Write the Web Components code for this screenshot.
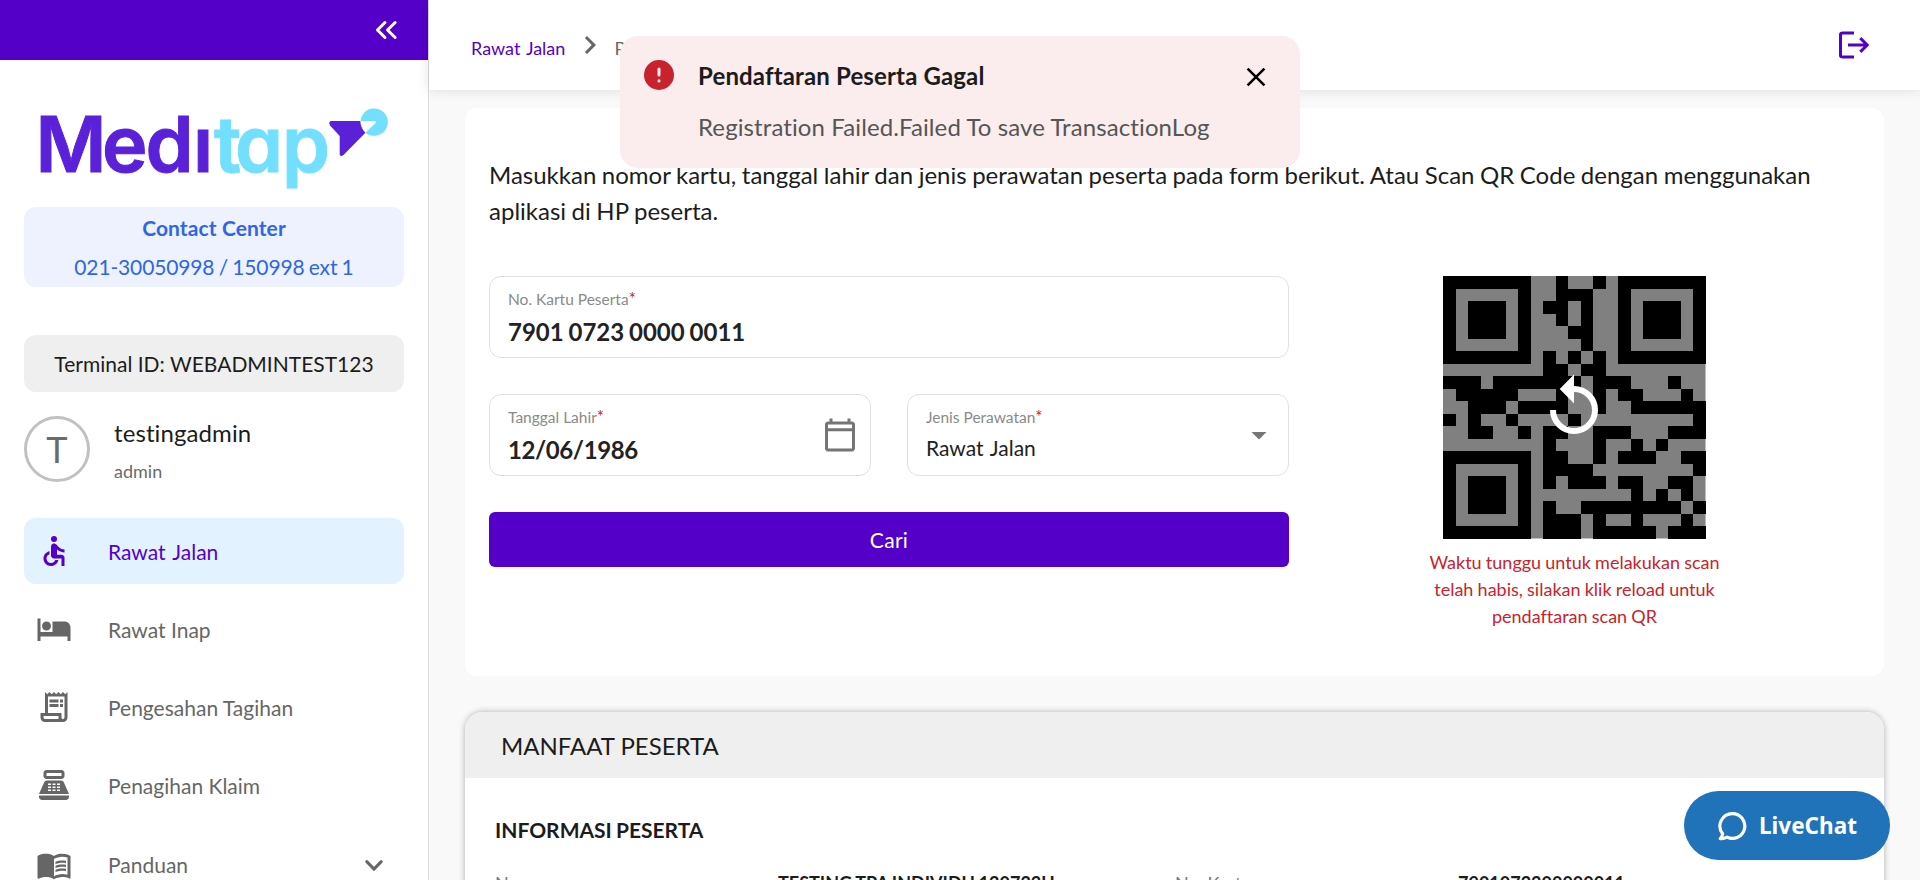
<!DOCTYPE html>
<html lang="id">
<head>
<meta charset="utf-8">
<title>Meditap</title>
<style>
html,body{margin:0;height:100%;overflow:hidden}
body{font-family:Lato,"Liberation Sans",sans-serif;font-variant-ligatures:none;color:#1c1c1c;background:#f9f9f9}
</style>
</head>
<body>
<mt-app></mt-app>
<script>
const define = (name, html, setup) => customElements.define(name, class extends HTMLElement {
  constructor() {
    super();
    const t = document.createElement('template');
    t.innerHTML = html;
    this.attachShadow({mode: 'open'}).append(t.content.cloneNode(true));
  }
  connectedCallback() { if (setup) setup(this, this.shadowRoot); }
});

const ICONS = {
  wheelchair: '<circle cx="12" cy="4" r="2"/><path d="M19 13v-2c-1.54.02-3.09-.75-4.07-1.83l-1.29-1.43c-.17-.19-.38-.34-.61-.45-.01 0-.01-.01-.02-.01H13c-.35-.2-.75-.3-1.19-.26C10.76 7.11 10 8.04 10 9.09V15c0 1.1.9 2 2 2h5v5h2v-5.5c0-1.1-.9-2-2-2h-3v-3.45c1.29 1.07 3.25 1.94 5 1.95zm-6.17 5c-.41 1.16-1.52 2-2.83 2-1.66 0-3-1.34-3-3 0-1.31.84-2.41 2-2.83V12.1c-2.28.46-4 2.48-4 4.9 0 2.76 2.24 5 5 5 2.42 0 4.44-1.72 4.9-4h-2.07z"/>',
  bed: '<path d="M7 13c1.66 0 3-1.34 3-3S8.66 7 7 7s-3 1.34-3 3 1.34 3 3 3zm12-6h-8v7H3V5H1v15h2v-3h18v3h2v-9c0-2.21-1.79-4-4-4z"/>',
  receipt: '<path d="M19.5 3.5L18 2l-1.5 1.5L15 2l-1.5 1.5L12 2l-1.5 1.5L9 2 7.5 3.5 6 2v14H3v3c0 1.66 1.34 3 3 3h12c1.66 0 3-1.34 3-3V2l-1.5 1.5zM15 20H6c-.55 0-1-.45-1-1v-1h10v2zm4-1c0 .55-.45 1-1 1s-1-.45-1-1v-3H8V5h11v14z"/><path d="M9 7h6v2H9zM16 7h2v2h-2zM9 10h6v2H9zM16 10h2v2h-2z"/>',
  register: '<path fill-rule="evenodd" d="M17 2H7c-1.1 0-2 .9-2 2v2c0 1.1.9 2 2 2h10c1.1 0 2-.9 2-2V4c0-1.1-.9-2-2-2zm0 4H7V4h10v2zm3 16H4c-1.1 0-2-.9-2-2v-1h20v1c0 1.1-.9 2-2 2zm-1.47-11.81C18.21 9.47 17.49 9 16.7 9H7.3c-.79 0-1.51.47-1.83 1.19L2 18h20l-3.47-7.81zM8 11h2v1H8zM11 11h2v1h-2zM14 11h2v1h-2zM8 13h2v1H8zM11 13h2v1h-2zM14 13h2v1h-2zM8 15h2v1H8zM11 15h2v1h-2zM14 15h2v1h-2z"/>',
  book: '<path d="M21 5c-1.11-.35-2.33-.5-3.5-.5-1.95 0-4.05.4-5.5 1.5-1.45-1.1-3.55-1.5-5.5-1.5S2.45 4.9 1 6v14.65c0 .25.25.5.5.5.1 0 .15-.05.25-.05C3.1 20.45 5.05 20 6.5 20c1.95 0 4.05.4 5.5 1.5 1.35-.85 3.8-1.5 5.5-1.5 1.65 0 3.35.3 4.75 1.05.1.05.15.05.25.05.25 0 .5-.25.5-.5V6c-.6-.45-1.25-.75-2-1zm0 13.5c-1.1-.35-2.3-.5-3.5-.5-1.7 0-4.15.65-5.5 1.5V8c1.35-.85 3.8-1.5 5.5-1.5 1.2 0 2.4.15 3.5.5v11.5z"/><path d="M17.5 10.5c.88 0 1.73.09 2.5.26V9.24c-.79-.15-1.64-.24-2.5-.24-1.7 0-3.24.29-4.5.83v1.66c1.13-.64 2.7-.99 4.5-.99zM13 12.49v1.66c1.13-.64 2.7-.99 4.5-.99.88 0 1.73.09 2.5.26V11.9c-.79-.15-1.64-.24-2.5-.24-1.7 0-3.24.3-4.5.83zM17.5 14.33c-1.7 0-3.24.29-4.5.83v1.66c1.13-.64 2.7-.99 4.5-.99.88 0 1.73.09 2.5.26v-1.52c-.79-.16-1.64-.24-2.5-.24z"/>',
  down: '<path fill="none" stroke="currentColor" stroke-width="2" stroke-linecap="round" d="M7.2 9.1L12 14l4.8-4.9"/>',
  right: '<path d="M8.59 16.59L13.17 12 8.59 7.41 10 6l6 6-6 6z"/>',
  collapse: '<path fill="none" stroke="currentColor" stroke-width="2" stroke-linecap="round" stroke-linejoin="round" d="M18.1 7L13 12l5.1 5M11.3 7l-5 5 5 5"/>',
  logout: '<path fill="none" stroke="currentColor" stroke-width="2" d="M12 4H4.600Q3 4 3 5v14q0 1 1.600 1H12M8 12h12.600M16.200 7.400l4.600 4.600-4.600 4.600"/>',
  calendar: '<path d="M20 3h-1V1h-2v2H7V1H5v2H4c-1.1 0-2 .9-2 2v16c0 1.1.9 2 2 2h16c1.1 0 2-.9 2-2V5c0-1.1-.9-2-2-2zm0 18H4V9.5h16V21zm0-13.5H4V5h16v2.5z"/>',
  caret: '<path d="M7 10l5 5 5-5z"/>',
  alert: '<circle cx="12" cy="12" r="10"/><path stroke="#fbeced" stroke-width="2" stroke-linecap="round" d="M12 8v4M12 15.900v.1"/>',
  close: '<path fill="none" stroke="currentColor" stroke-width="1.7" d="M6.4 6.4l11.200 11.200M17.600 6.400L6.400 17.600"/>',
  chat: '<path fill="none" stroke="currentColor" stroke-width="2.400" stroke-linejoin="round" d="M12.300 2.700a9.300 9.300 0 1 1-4.100 17.650C6.800 21.200 5 21.700 3.200 21.500c1.100-1.100 1.700-2.300 1.800-3.700A9.300 9.300 0 0 1 12.300 2.700z"/>'
};

define('mt-icon', `<style>:host{display:block;flex:none;width:36px;height:36px}svg{display:block;width:100%;height:100%;fill:currentColor}</style><svg viewBox="0 0 24 24"></svg>`,
  (el, root) => { root.querySelector('svg').innerHTML = ICONS[el.getAttribute('name')]; });

define('mt-logo', `<style>:host{display:block;height:80px}svg{display:block;overflow:visible}
text{font-family:Inter,"Liberation Sans",sans-serif;font-weight:600;font-size:77px;font-feature-settings:"cv11" 1;stroke-width:1px}
.a{fill:#5b21d8;stroke:#5b21d8}.b{fill:#73dfff;stroke:#73dfff}</style>
<svg width="350" height="80" viewBox="0 0 350 80">
<text class="a" y="63.500" x="-4.500 62 105.500 153">Medi</text>
<rect x="157" y="0" width="14" height="21" fill="#fff"/>
<text class="b" y="63.500" x="174 195 242">tap</text>
<path d="M291.500 13H320.300Q320.500 20 325.400 24.800L303.500 47Q300 49 299.700 46.500V28L290 17.500Q288 13 291.500 13z" fill="#5b21d8"/>
<path d="M320.500 13A13.700 13.700 0 1 1 325.500 24.700L335.500 15Q337 13 334.500 13Z" fill="#73dfff"/>
</svg>`);

define('mt-nav-item', `<style>
:host{display:flex;align-items:center;box-sizing:border-box;height:66px;padding:0 12px;border-radius:12px;font-size:21px;color:#666}
:host([active]){background:#e3f2ff;color:#5500c8;word-spacing:2px}
:host([expandable]){height:69px}
span{flex:1;margin-left:36px}
.more{display:none;margin-top:2px}
:host([expandable]) .more{display:block}</style><mt-icon class="lead"></mt-icon><span><slot></slot></span><mt-icon class="more" name="down"></mt-icon>`,
  (el, root) => {
    const icon = document.createElement('mt-icon');
    icon.setAttribute('name', el.getAttribute('icon'));
    root.querySelector('.lead').replaceWith(icon);
  });

define('mt-sidebar', `<style>
:host{display:flex;flex-direction:column;width:428px;height:880px;overflow:hidden;background:#fff;border-right:1px solid #dcdcdc}
.top{height:60px;flex:none;background:#5500c8;color:#fff;display:flex;justify-content:flex-end;align-items:center;padding-right:24px}
mt-logo{margin:48px 24px 19px 40px;flex:none}
.contact,.terminal{flex:none;margin:0 24px;border-radius:12px;text-align:center;font-size:21px}
.contact{box-sizing:border-box;height:80px;padding-top:1px;background:#eef2ff;color:#2f66e3;line-height:39px}
.contact b{letter-spacing:.1px}
.phone{letter-spacing:-.150px;word-spacing:-.900px}
.terminal{margin-top:48px;height:57px;line-height:58px;background:#efefef}
.user{display:flex;align-items:center;gap:24px;margin:24px 24px 36px;height:66px}
.avatar{box-sizing:border-box;width:66px;height:66px;border:3px solid #c1c1c1;border-radius:50%;line-height:61px;text-align:center;font-size:36px;color:#6b6b6b}
.name{font-size:24px;line-height:38px;margin-top:5px;letter-spacing:.1px}.role{font-size:18px;line-height:38px;color:#6b6b6b}
nav{display:flex;flex-direction:column;gap:12px;margin:0 24px}
</style>
<div class="top"><mt-icon name="collapse"></mt-icon></div>
<mt-logo></mt-logo>
<div class="contact"><b>Contact Center</b><div class="phone">021-30050998 / 150998 ext 1</div></div>
<div class="terminal">Terminal ID: WEBADMINTEST123</div>
<div class="user"><div class="avatar">T</div><div><div class="name">testingadmin</div><div class="role">admin</div></div></div>
<nav>
<mt-nav-item active icon="wheelchair">Rawat Jalan</mt-nav-item>
<mt-nav-item icon="bed">Rawat Inap</mt-nav-item>
<mt-nav-item icon="receipt">Pengesahan Tagihan</mt-nav-item>
<mt-nav-item icon="register">Penagihan Klaim</mt-nav-item>
<mt-nav-item expandable icon="book">Panduan</mt-nav-item>
</nav>`);

define('mt-topbar', `<style>
:host{display:flex;align-items:center;box-sizing:border-box;height:90px;padding:0 48px 0 42px;background:#fff;box-shadow:0 0 12px rgba(0,0,0,.12);font-size:18px;color:#666}
a{color:#5500c8;word-spacing:1.5px}
span,a{margin-top:6px}
.sep{margin:0 6px 0 7px}
.out{margin-left:auto;color:#5500c8}</style>
<a>Rawat Jalan</a><mt-icon class="sep" name="right"></mt-icon><span>Pendaftaran</span><mt-icon class="out" name="logout"></mt-icon>`);

define('mt-field', `<style>
:host{display:flex;align-items:center;box-sizing:border-box;height:82px;border:1px solid #e0e0e0;border-radius:12px;padding:0 12px 0 18px}
.text{flex:1}
label{display:block;font-size:15.500px;line-height:20px;color:#8a8a8a;margin-top:1px}
i{font-style:normal;color:#c8232c;font-size:17px;line-height:1px}
.value{font-size:24px;line-height:30px;font-weight:700;margin-top:8px;color:#222;word-spacing:-1px}
:host([date]) .value{letter-spacing:-.400px}
:host([plain]){padding-right:11px}
:host([plain]) .value{font-size:21px;font-weight:400;margin-top:6px;margin-bottom:2px;word-spacing:1.500px}
::slotted(mt-icon){color:#757575}
</style><div class="text"><label></label><div class="value"><slot></slot></div></div><slot name="icon"></slot>`,
  (el, root) => { root.querySelector('label').innerHTML = el.getAttribute('label') + '<i>*</i>'; });

define('mt-qr', `<style>:host{display:block;width:262.500px;height:262.500px}svg{display:block}</style>
<svg width="262.500" height="262.500" viewBox="0 0 262.500 262.500"><rect width="262.500" height="262.500" fill="#808080"/><path class="m" shape-rendering="crispEdges"/><path d="M110 134a21 21 0 1 0 21-21" fill="none" stroke="#fff" stroke-width="6"/><path d="M116.700 113L131 98.500v29z" fill="#fff"/></svg>`,
  (el, root) => {
    const rows = [
      '111111100100101111111', '100000100111001000001', '101110101101001011101', '101110100010101011101',
      '101110100011001011101', '100000100001001000001', '111111101010101111111', '000000001101100000000',
      '111011111110111000100', '011111000100101100010', '001110111100100111111', '101001000010000000001',
      '001100101100111000111', '000000001000100101000', '111111101100101110011', '100000101111000000001',
      '101110101011101100110', '101110100000000101010', '101110101001111111101', '100000101110100100010',
      '111111101110111110111'];
    // format and data modules between the two top finder patterns
    ['0010010', '0011100', '0110100', '0010100', '0001100', '0000100', '0101010'].forEach((mid, y) => {
      rows[y] = rows[y].slice(0, 7) + mid + rows[y].slice(14);
    });
    let d = '';
    rows.forEach((r, y) => r.replace(/1+/g, (m, x) => { d += `M${x * 12.5} ${y * 12.5}h${m.length * 12.5}v12.5h-${m.length * 12.5}z`; }));
    root.querySelector('.m').setAttribute('d', d);
  });

define('mt-button', `<style>:host{display:block;height:55px;line-height:55px;border-radius:6px;background:#5500c8;color:#fff;text-align:center;font-size:21px;letter-spacing:.3px}</style><slot></slot>`);

define('mt-register-card', `<style>
:host{display:block;box-sizing:border-box;height:568px;background:#fff;border-radius:12px;padding:48.500px 24px 0}
p{margin:0;font-size:24px;line-height:36px;word-spacing:-.600px}
.body{display:grid;grid-template-columns:800px 1fr;margin-top:47.500px}
form{display:grid;grid-template-columns:1fr 1fr;gap:36px;align-content:start}
.wide{grid-column:1/3}
aside{display:flex;flex-direction:column;align-items:center}
.note{width:300px;margin-top:10px;text-align:center;font-size:18px;line-height:27px;color:#c8232c;word-spacing:-.400px}
</style>
<p>Masukkan nomor kartu, tanggal lahir dan jenis perawatan peserta pada form berikut. Atau Scan QR Code dengan menggunakan aplikasi di HP peserta.</p>
<div class="body">
<form>
<mt-field class="wide" label="No. Kartu Peserta">7901 0723 0000 0011</mt-field>
<mt-field date label="Tanggal Lahir">12/06/1986<mt-icon slot="icon" name="calendar"></mt-icon></mt-field>
<mt-field plain label="Jenis Perawatan">Rawat Jalan<mt-icon slot="icon" name="caret"></mt-icon></mt-field>
<mt-button class="wide">Cari</mt-button>
</form>
<aside><mt-qr></mt-qr><div class="note">Waktu tunggu untuk melakukan scan telah habis, silakan klik reload untuk pendaftaran scan QR</div></aside>
</div>`);

define('mt-benefit-card', `<style>
:host{display:block;height:500px;background:#fff;border-radius:18px;box-shadow:0 0 6px rgba(0,0,0,.3);overflow:hidden}
header{height:66px;line-height:67px;padding:0 36px;background:#efefef;font-size:24px}
h3{margin:39px 30px 0;font-size:21px;line-height:26px;word-spacing:-1px}
.row{display:grid;grid-template-columns:283px 397px 283px 1fr;margin:27px 30px 0;font-size:18px;line-height:26px;color:#777}
b{color:#1c1c1c;word-spacing:-.7px}
</style>
<header>MANFAAT PESERTA</header>
<h3>INFORMASI PESERTA</h3>
<div class="row"><span>Nama</span><b>TESTING TPA INDIVIDU 120723U</b><span>No. Kartu</span><b>7901072300000011</b></div>`);

define('mt-toast', `<style>
:host{display:grid;grid-template-columns:30px 1fr 30px;column-gap:24px;box-sizing:border-box;width:680px;height:132px;border-radius:18px;background:#fbeced;padding:24px 30px 0 21px;align-content:start;font-size:24px}
.a{color:#c8232c;margin:-3px -3px 0 0}
b{line-height:32px;margin-left:3px;letter-spacing:.140px}
.x{color:#000;margin:-1px 0 0 2px;justify-self:center;width:36px}
p{grid-column:2;margin:16px 0 0 3px;line-height:31px;color:#555;letter-spacing:.1px}
</style><mt-icon class="a" name="alert"></mt-icon><b>Pendaftaran Peserta Gagal</b><mt-icon class="x" name="close"></mt-icon><p>Registration Failed.Failed To save TransactionLog</p>`);

define('mt-livechat', `<style>
:host{display:flex;align-items:center;box-sizing:border-box;width:206px;height:69px;border-radius:35px;background:#2073b9;color:#fff;padding-left:32px;font:700 22.500px/71px "Noto Sans","Open Sans",sans-serif}
mt-icon{width:32px;height:32px;margin-right:11px}</style><mt-icon name="chat"></mt-icon><span>LiveChat</span>`);

define('mt-app', `<style>
:host{display:flex;width:1920px;height:880px;overflow:hidden;position:relative}
main{flex:1;background:#f9f9f9}
.content{padding:18px 36px 0;display:flex;flex-direction:column;gap:36px}
mt-toast{position:absolute;left:620px;top:36px}
mt-livechat{position:absolute;right:30px;bottom:20px}
</style>
<mt-sidebar></mt-sidebar>
<main><mt-topbar></mt-topbar><div class="content"><mt-register-card></mt-register-card><mt-benefit-card></mt-benefit-card></div></main>
<mt-toast></mt-toast><mt-livechat></mt-livechat>`);
</script>
</body>
</html>
